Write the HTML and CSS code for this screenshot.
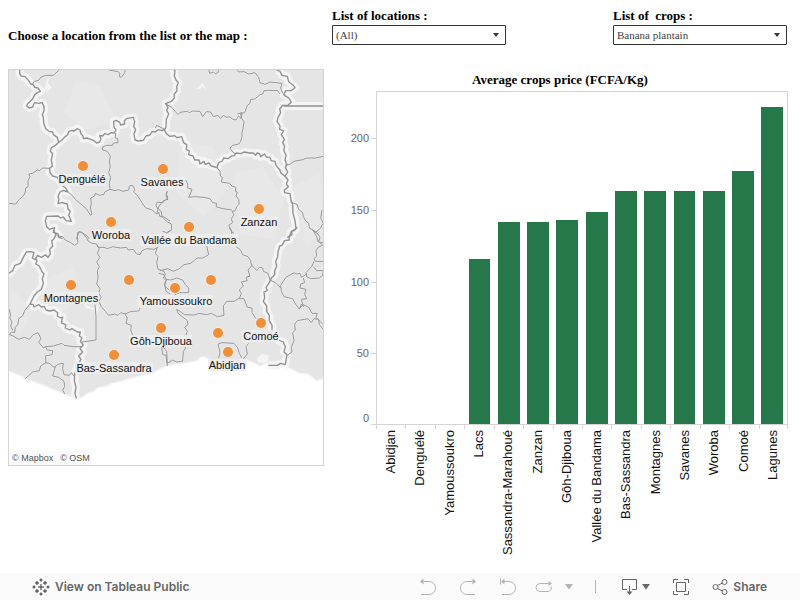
FILE: index.html
```html
<!DOCTYPE html>
<html lang="en">
<head>
<meta charset="utf-8">
<meta name="viewport" content="width=device-width, initial-scale=1">
<title>Average crops price</title>
<link rel="stylesheet" href="styles.css">
</head>
<body>
<header class="filters">
  <h1 class="heading intro">Choose a location from the list or the map :</h1>
  <div class="filter">
    <label class="heading" for="locations">List of locations :</label>
    <div class="select-box">
      <select id="locations"><option>(All)</option><option>Abidjan</option><option>Lagunes</option></select>
      <svg class="caret" viewBox="0 0 6 4" aria-hidden="true"><path d="M0 0h6L3 4z"/></svg>
    </div>
  </div>
  <div class="filter crops">
    <label class="heading" for="crops">List of &nbsp;crops :</label>
    <div class="select-box">
      <select id="crops"><option>Banana plantain</option></select>
      <svg class="caret" viewBox="0 0 6 4" aria-hidden="true"><path d="M0 0h6L3 4z"/></svg>
    </div>
  </div>
</header>

<main class="dashboard">
  <section class="map" aria-label="Map">
    <svg viewBox="9 70 314 395">
      <defs>
        <g id="borders">
          <g transform="translate(0 180)">
            <path d="M60 24L59 40 63 48 75 50 86 62 92 72 100 74 104 82 114 84 121 94 112 98 105 103 97 118 83 131 80 138 88 144 98 141 103 128 117 130 127 128 132 140 132 152 127 164 130 172 131 188 137 206 147 214 158 216 160 224 172 232 176 247 186 240 193 232 203 224 207 214 216 211 222 214 231 206 240 210 242 220 249 228 250 236 261 234 272 238 282 242 290 249 299 246 303 237 299 227 308 228 314 221 325 224 332 218 343 219 348 210 342 202 341 184 349 181 359 187 362 195 374 192 373 183 379 176 400 172 404 185 401 200 407 208 402 222 405 240 415 243 430 241 438 228 450 225 456 215 466 216 474 209 486 212 494 208"/>
            <path d="M176 247L167 256 154 263 151 274 158 281 154 300 157 318 149 325 150 338 158 348 172 352 188 378 197 384 204 396 190 391 180 396 174 410 177 418 174 430 186 428 202 432 204 448 211 454 206 466 214 484 198 482 190 471 182 474 174 468 140 469 136 482 140 500 148 508 164 503 160 517 174 522 176 532 187 535"/>
          </g>
          <g transform="translate(480 180)">
            <path d="M36 24L45 32 43 48 48 60 55 68 50 80 51 92 42 104 43 114 34 124 17 131 24 142 20 152 26 162 19 178 18 200 14 210"/>
            <path d="M12 208L20 222 30 229 44 227 51 233 65 230 71 248 80 254 79 268 88 273 86 284 99 288 104 300 117 300 120 312 132 304 136 313 147 309 154 318 171 323 176 308 187 303 191 294 204 296 214 288 223 287 228 279 243 281 252 276 268 279 280 279 287 286 291 279 299 281 302 290 314 282 319 291 330 292 333 302 345 304 348 316 360 330 362 338 375 349"/>
            <path d="M350 30L360 34 366 46 382 49 386 65 398 74 405 83 393 92 377 92 371 104 386 114 394 126 384 136 368 136 359 147 362 158 354 172 351 184 360 198 359 208 371 213 364 224 373 238 368 248 374 260 371 270 378 286 375 300 381 314 376 322 383 336 375 348 384 360 379 372 385 380 373 390 374 398 390 401 393 421 398 434 399 460 405 482 408 506 395 514 396 524 382 533"/>
            <path d="M370 138H496"/>
          </g>
          <g transform="translate(0 690)">
            <path d="M160 0L168 14 162 26 155 33 158 48 149 58 151 72 144 82 136 74 125 82 112 76 106 89 97 84 102 68 92 65 79 66 70 82 61 100 45 106 38 122 24 132"/>
            <path d="M106 84L111 92 107 102 118 108 126 125 132 132 127 146 130 160 124 178 112 186 102 198 96 210 90 222 100 224 102 231 117 224 124 231 133 229 138 240 150 243 162 240 173 248 172 258 182 264 188 261 184 279 197 284 196 294 210 300 216 296 232 306 241 306 238 318 246 324 241 334 250 345 240 356 248 366 236 378 243 388 236 400 224 432 223 452 228 472 225 490 229 505"/>
          </g>
          <g transform="translate(480 690)">
            <path d="M412 -8L402 2 394 4 388 20 388 30 374 32 366 46 359 48 354 66 353 80 347 94 350 108 344 122 344 134 334 144 328 158 318 172 322 182 312 186 314 204 310 214 320 228 320 244 328 256 328 272 336 286 336 300 354 330 370 336 376 350 372 366 381 374 378 390 376 404 362 400 352 406 325 406"/>
          </g>
        </g>
        <g id="regions">
          <g transform="translate(0 180)">
            <path d="M97 73L103 64 116 61 122 52 136 46 160 46 181 27M326 30L354 35 360 40 358 50 364 52 374 38 376 28"/>
            <path d="M148 325L128 324 118 332 112 330 98 340 86 342 90 350 84 362 84 380 77 384 76 396 70 408 58 418 47 432 24 430"/>
            <path d="M347 219L346 234 353 236 354 248 340 249 338 256 320 256 306 262 308 270 322 274 331 288 328 306 331 320 326 338 332 352 328 370 330 388"/>
            <path d="M205 396L220 410 226 418 240 430 258 445 272 466 276 462 271 444 274 430 272 414 284 408 286 400 298 406 312 403 314 396 330 388 345 392 355 389 370 394 386 390 388 378 398 376 404 388 401 396 412 406 426 428 436 443 456 450 470 462 476 456 480 470 490 470 510 483"/>
            <path d="M502 394L498 402 504 412 488 428 472 426 468 436 474 448 470 462M230 538L234 516 244 516 262 528 268 537"/>
          </g>
          <g transform="translate(480 180)">
            <path d="M-14 205L-10 196 14 208M146 28L149 40 160 36 166 41 174 38 176 28M228 28L236 36 252 35 266 42 285 38 296 52 300 68 316 73 330 66 350 68 366 70 362 84 368 100M17 131L35 142 54 164 60 157 82 154 88 158 98 153 120 154 128 170 139 155 152 156 160 170 174 166 182 176 190 166 200 172 208 170 219 178 228 180 236 168 244 176 242 160 254 158 262 136 270 130 272 118 284 117 300 104 308 102 312 92 326 91 340 92 352 91 360 102"/>
            <path d="M232 162L246 158 244 174 252 184 249 206 246 218 246 230 242 244 236 252 218 256 210 264 218 276 226 282M376 314L388 314 402 304 428 299 440 294 466 294 490 289"/>
            <path d="M171 323L180 334 181 348 187 352 184 366 208 370 216 378 228 382 226 394 232 396 228 408 236 418 238 432 230 440 226 452 216 454 222 464 214 476 218 488 206 496 214 510 216 530"/>
            <path d="M77 360L83 372 83 384 96 388 91 402 86 412 104 410 132 412 150 416 158 428 170 430 168 440 188 446 204 448 216 450"/>
            <path d="M22 394L18 408 24 418 10 422 2 432 -6 444 4 456 6 470 22 486 34 492 35 510 20 520M392 426L412 434 416 448 428 458 430 470 438 484 446 490 448 504 468 516 482 504 486 494 492 490M460 512L470 530 474 545 492 550M486 450L482 474 490 490"/>
          </g>
          <g transform="translate(0 690)">
            <path d="M172 18L188 20 196 30 212 38 224 46 234 38 232 20 238 5 248 10 260 24 264 33 276 40 290 42 294 52 312 52 322 56 338 50 362 54 380 52 384 60 400 58 410 72 420 74 426 62 440 56 462 58 474 52"/>
            <path d="M290 44L298 56 292 70 300 82 290 96 298 110 292 122 294 144 290 162 300 176 296 190 304 202 296 214 304 230 316 244 326 256 344 252 354 256 362 248 376 252 388 246 400 244 416 243 420 234"/>
            <path d="M285 224L288 260 288 330 246 336M374 250L382 264 378 280 394 286 392 300 398 316"/>
            <path d="M472 52L466 70 474 80 470 98 474 118 492 124 496 134 490 144 498 152 494 168 510 182"/>
            <path d="M246 350L220 350 192 346 186 340 160 348 136 350 130 354 116 336 123 326 114 308 100 314 88 328 74 322 56 328 40 318 28 314 34 306 44 308 46 292 54 282 56 266 68 258 74 242 90 222M28 238L32 256 29 264 36 276 32 288 38 300"/>
            <path d="M136 350L142 360 158 362 156 374 136 378 138 398 122 408 118 422 98 426 76 446M136 398L148 400 162 412 176 402 190 400 188 416 192 434 208 436 214 428 222 438M166 410L158 438 176 442 192 454 194 470 188 480 194 492M485 350L488 374 498 376 502 408"/>
          </g>
          <g transform="translate(480 690)">
            <path d="M140 48L146 74 128 84 112 84 92 100 72 104 58 116 40 124 24 116 0 122M-4 130L12 134 18 148 32 150 50 144 68 150 76 164 86 174 86 188 58 188 44 194M20 150L13 160 18 184 30 192M8 4L20 8 30 2M208 -6L216 6 222 10"/>
            <path d="M228 50L242 60 248 74 264 80 272 92 274 106 284 114 290 122 298 112 308 114 310 124 324 130 330 150 346 158 362 174"/>
            <path d="M278 104L264 120 270 138 258 142 262 152 244 156 250 168 238 180 244 190 238 206 252 206 262 232 276 234 276 248 288 266M240 204L228 210 222 214 200 214 190 228 192 256 172 260 154 250 140 254 116 250 104 255 74 254 60 244 50 238 54 250 82 272 84 284 74 292 82 304 74 324 76 356 70 364 68 394 50 396 38 390 22 400 20 364 8 350"/>
            <path d="M176 384L180 366 174 342 186 338 222 340 232 352 238 370 246 384M250 386L262 372 258 350 266 340"/>
            <path d="M456 0L472 10 480 22 476 34 488 46 474 52 468 62 470 78 462 86 466 94 490 94M462 94L456 108 438 128 440 140 452 146 478 144 488 136 490 122 470 122 460 110M440 132L424 142 420 130 408 132 402 128 378 142 362 166 364 184 372 200 398 206 404 218 418 238 424 222 430 230 424 208 440 206 434 192 438 178 420 174 422 162 434 158 430 144M418 236L430 224 446 232 456 250 472 250 468 262 490 284M490 298L478 284 476 268 462 266 454 278 444 266 412 272 404 282 406 300 398 308 402 332 394 352 396 366 382 376"/>
          </g>
        </g>
      </defs>
      <g transform="scale(.33333333)">
        <path class="land" d="M24 200H980V1132L950 1142 938 1132 924 1122 900 1120 876 1108 858 1100 836 1102 824 1092 796 1090 780 1098 756 1086 740 1080 720 1086 640 1084 612 1070 600 1072 592 1082 560 1088 530 1092 500 1098 474 1110 450 1122 430 1126 410 1130 394 1134 362 1144 334 1150 318 1158 292 1164 280 1174 262 1180 246 1192 226 1197 210 1188 190 1180 168 1172 148 1162 120 1152 92 1142 76 1136 60 1126 38 1118 20 1110V200Z"/>
        <g class="relief">
          <path d="M230 240L300 260 350 360 260 390 190 340Z"/>
          <path d="M540 430L640 440 690 560 610 650 530 580Z"/>
          <path d="M110 850L220 800 230 900 160 960Z"/>
          <path d="M700 520L790 500 850 600 820 720 720 700Z"/>
          <path d="M30 860L100 930 60 1010 30 960Z"/>
          <path d="M880 560L960 520 970 690 920 740Z"/>
        </g>
        <path class="lake" d="M140 240L148 234 144 250 156 262 138 278 144 264 130 276 136 256ZM588 268L608 248 618 270 608 260 600 266ZM250 910L276 924 296 914 290 952 284 930 258 924ZM770 1076L784 1062 806 1064 804 1090 776 1088Z"/>
        <use href="#borders" class="halo"/>
        <use href="#regions" class="halo-soft"/>
        <use href="#regions" class="region-line"/>
        <use href="#borders" class="border-line"/>
      </g>
      <g class="plates">
        <rect x="58" y="174" width="48" height="12"/><rect x="140" y="177" width="45" height="12"/>
        <rect x="91" y="229" width="40" height="12"/><rect x="140" y="234" width="98" height="12"/>
        <rect x="240" y="216" width="38" height="12"/><rect x="43" y="292" width="56" height="12"/>
        <rect x="138" y="295" width="75" height="12"/><rect x="129" y="335" width="63" height="12"/>
        <rect x="242" y="330" width="37" height="12"/><rect x="75" y="362" width="78" height="12"/>
        <rect x="208" y="359" width="38" height="12"/>
      </g>
      <g class="dots">
        <circle cx="83" cy="166" r="5"/><circle cx="163" cy="169" r="5"/><circle cx="259" cy="209" r="5"/>
        <circle cx="111" cy="222" r="5"/><circle cx="189" cy="227" r="5"/><circle cx="71" cy="285" r="5"/>
        <circle cx="129" cy="280" r="5"/><circle cx="175" cy="288" r="5"/><circle cx="211" cy="280" r="5"/>
        <circle cx="161" cy="328" r="5"/><circle cx="218" cy="333" r="5"/><circle cx="261" cy="323" r="5"/>
        <circle cx="228" cy="352" r="5"/><circle cx="114" cy="355" r="5"/>
      </g>
      <g class="places">
        <text x="82" y="183">Denguélé</text><text x="162" y="186">Savanes</text>
        <text x="111" y="239">Woroba</text><text x="189" y="244">Vallée du Bandama</text>
        <text x="259" y="226">Zanzan</text><text x="71" y="302">Montagnes</text>
        <text x="176" y="305">Yamoussoukro</text><text x="161" y="345">Gôh-Djiboua</text>
        <text x="261" y="340">Comoé</text><text x="114" y="372">Bas-Sassandra</text>
        <text x="227" y="369">Abidjan</text>
      </g>
    </svg>
    <p class="credits"><span>© Mapbox</span><span>© OSM</span></p>
  </section>

  <section class="chart">
    <h2 class="heading chart-title">Average crops price (FCFA/Kg)</h2>
    <div class="axis">
      <span>200</span><span>150</span><span>100</span><span>50</span><span class="zero">0</span>
    </div>
    <div class="plot">
      <div class="bar" style="height:0%"></div>
      <div class="bar" style="height:0%"></div>
      <div class="bar" style="height:0%"></div>
      <div class="bar" style="height:49.6%"></div>
      <div class="bar" style="height:60.8%"></div>
      <div class="bar" style="height:60.8%"></div>
      <div class="bar" style="height:61.4%"></div>
      <div class="bar" style="height:63.8%"></div>
      <div class="bar" style="height:70.1%"></div>
      <div class="bar" style="height:70.1%"></div>
      <div class="bar" style="height:70.1%"></div>
      <div class="bar" style="height:70.1%"></div>
      <div class="bar" style="height:76.1%"></div>
      <div class="bar" style="height:95.4%"></div>
    </div>
    <div class="categories">
      <div><span>Abidjan</span></div><div><span>Denguélé</span></div><div><span>Yamoussoukro</span></div>
      <div><span>Lacs</span></div><div><span>Sassandra-Marahoué</span></div><div><span>Zanzan</span></div>
      <div><span>Gôh-Djiboua</span></div><div><span>Vallée du Bandama</span></div><div><span>Bas-Sassandra</span></div>
      <div><span>Montagnes</span></div><div><span>Savanes</span></div><div><span>Woroba</span></div>
      <div><span>Comoé</span></div><div><span>Lagunes</span></div>
    </div>
  </section>
</main>

<footer class="toolbar">
  <a class="brand" href="#">
    <svg width="18" height="18" viewBox="0 0 18 18" aria-hidden="true"><path d="M9 6v6M6 9h6M5 3v4M3 5h4M13 3v4M11 5h4M5 11v4M3 13h4M13 11v4M11 13h4M9 .5v3M7.500 2h3M9 14.500v3M7.500 16h3M2 7.500v3M.5 9h3M16 7.500v3M14.500 9h3"/></svg>
    View on Tableau Public
  </a>
  <div class="tools">
    <div class="history">
      <button class="muted" aria-label="Undo"><svg width="18" height="18" viewBox="0 0 18 18"><path d="M3 3.500h7a6 6 0 0 1 0 13H2"/><path class="solid" d="M1 3.500L4.500 .5v6z"/></svg></button>
      <button class="muted" aria-label="Redo"><svg width="18" height="18" viewBox="0 0 18 18"><path d="M15 3.500H8a6 6 0 0 0 0 13h8"/><path class="solid" d="M17 3.500L13.500 .5v6z"/></svg></button>
      <button class="muted" aria-label="Revert"><svg width="18" height="18" viewBox="0 0 18 18"><path d="M4 3.500h6a6 6 0 0 1 0 13H3M1.500 .5v6"/><path class="solid" d="M2 3.500L5.500 .5v6z"/></svg></button>
    </div>
    <button class="muted refresh" aria-label="Refresh"><svg width="18" height="18" viewBox="0 0 18 18"><path d="M14 5.500H5a3.500 3.500 0 0 0 0 8h8a3.500 3.500 0 0 0 3-5"/><path class="solid" d="M17 5.500L13.500 3v5z"/></svg><svg class="down" width="8" height="6" viewBox="0 0 8 6"><path class="solid" d="M0 0h8L4 5.500z"/></svg></button>
    <span class="divider"></span>
    <button class="download" aria-label="Download"><svg width="18" height="18" viewBox="0 0 18 18"><path d="M6 11.500H1.500v-10h14v10H11M8.500 8v7"/><path class="solid" d="M5.500 13.500h6l-3 3.500z"/></svg><svg class="down" width="8" height="6" viewBox="0 0 8 6"><path class="solid" d="M0 0h8L4 5.500z"/></svg></button>
    <button class="full" aria-label="Full screen"><svg width="18" height="18" viewBox="0 0 18 18"><path d="M1.500 5V1.500H6M12 1.500h4.500V5M16.500 13v3.500H12M6 16.500H1.500V13M4.500 4.500h9v9h-9z"/></svg></button>
    <button class="share"><svg width="16" height="18" viewBox="0 0 16 18" aria-hidden="true"><circle cx="3.500" cy="9" r="2.500"/><circle cx="12.500" cy="4" r="2.500"/><circle cx="12.500" cy="14" r="2.500"/><path d="M5.500 7.500l5-2.500M5.500 10.500l5 2.500"/></svg>Share</button>
  </div>
</footer>
</body>
</html>
```

FILE: styles.css
```css
* {
  box-sizing: border-box;
}

body {
  margin: 0;
  min-height: 100vh;
  display: flex;
  flex-direction: column;
  background: #fff;
  color: #000;
  font-family: "Liberation Sans", Arial, sans-serif;
}

.heading {
  margin: 0;
  font: bold 13px/16px "Liberation Serif", "Times New Roman", serif;
}

.filters {
  display: grid;
  grid-template-columns: 324fr 174fr 107fr 174fr;
  align-items: end;
  padding: 8px 13px 0 8px;
}

.intro {
  padding-bottom: 1px;
}

.filter.crops {
  grid-column: 4;
}

.filter label {
  display: block;
  margin-bottom: 1px;
}

.select-box {
  position: relative;
}

.select-box select {
  display: block;
  width: 100%;
  height: 20px;
  padding: 0 3px;
  appearance: none;
  border: 1px solid #333;
  border-radius: 1px;
  background: #fff;
  color: #444;
  font: 11px/18px "Liberation Serif", "Times New Roman", serif;
}

.caret {
  position: absolute;
  top: 8px;
  right: 7px;
  width: 6px;
  height: 4px;
  fill: #333;
  pointer-events: none;
}

.dashboard {
  display: grid;
  grid-template-columns: 316fr 447fr;
  gap: 17px;
  align-items: start;
  padding: 24px 12px 16px 8px;
}

.map {
  position: relative;
  border: 1px solid #d4d4d4;
}

.map svg {
  display: block;
  width: 100%;
}

.land {
  fill: #e5e5e5;
  stroke: #f2f2f2;
  stroke-width: 4;
}

.relief {
  fill: #e8e8e8;
}

.lake {
  fill: #f4f4f4;
}

.halo,
.halo-soft,
.region-line,
.border-line {
  fill: none;
  stroke-linejoin: round;
}

.halo {
  stroke: #f4f4f4;
  stroke-width: 24;
}

.halo-soft {
  stroke: #ececec;
  stroke-width: 7;
}

.region-line {
  stroke: #969696;
  stroke-width: 3;
}

.border-line {
  stroke: #919191;
  stroke-width: 4;
}

.plates {
  fill: #ededed;
}

.dots {
  fill: #f28e37;
  stroke: #ececec;
  stroke-width: 2;
  paint-order: stroke;
}

.places {
  font-size: 11px;
  text-anchor: middle;
  fill: #111;
}

.credits {
  position: absolute;
  left: 1px;
  bottom: 0;
  display: flex;
  gap: 5px;
  margin: 0;
  padding: 0 2px;
  background: #fafafa;
  color: #555;
  font-size: 9px;
  line-height: 14px;
}

.credits span + span {
  padding-left: 2px;
}

.chart {
  display: grid;
  grid-template-columns: 35px 1fr;
  grid-template-rows: auto 334px auto;
  padding-top: 3px;
}

.chart-title {
  grid-column: 2;
  justify-self: center;
  padding-right: 44px;
  margin-bottom: 3px;
}

.axis {
  display: grid;
  grid-template-rows: repeat(4, minmax(0, 1fr));
  padding-top: 47px;
  color: #666;
  font-size: 11px;
  line-height: 14px;
  text-align: right;
}

.axis span {
  align-self: start;
  position: relative;
  margin-top: -7px;
  padding-right: 7px;
}

.axis span::after {
  content: "";
  position: absolute;
  top: 7px;
  right: 0;
  width: 5px;
  height: 1px;
  background: #d4d4d4;
}

.axis span:nth-child(4),
.axis .zero {
  grid-area: 4 / 1;
}

.axis .zero {
  align-self: end;
}

.axis .zero::after {
  top: auto;
  bottom: 0;
}

.plot,
.categories {
  grid-column: 2;
  display: grid;
  grid-template-columns: repeat(14, 1fr);
}

.plot {
  align-items: end;
  border: 1px solid #d4d4d4;
}

.bar {
  width: 75%;
  justify-self: center;
  background: #26784a;
}

.categories div {
  display: flex;
  justify-content: center;
  align-items: flex-start;
  padding-top: 5px;
  background: linear-gradient(#d4d4d4, #d4d4d4) left top / 1px 4px no-repeat;
}

.categories div:last-child {
  background:
    linear-gradient(#d4d4d4, #d4d4d4) left top / 1px 4px no-repeat,
    linear-gradient(#d4d4d4, #d4d4d4) right top / 1px 4px no-repeat;
}

.categories span {
  writing-mode: vertical-rl;
  transform: rotate(180deg);
  color: #111;
  font-size: 13px;
  line-height: 16px;
  white-space: nowrap;
}

.toolbar {
  display: flex;
  align-items: center;
  justify-content: space-between;
  height: 27px;
  margin-top: auto;
  padding: 0 33px 0 32px;
  background: #fafafa;
  color: #666;
}

.brand,
.toolbar button {
  display: flex;
  align-items: center;
  gap: 5px;
  color: #666;
  font: 600 12px/18px Inter, "Open Sans", sans-serif;
  text-decoration: none;
}

.toolbar button {
  padding: 0;
  border: 0;
  background: none;
}

.toolbar svg {
  fill: none;
  stroke: currentColor;
  stroke-width: 1;
}

.brand svg {
  color: #333;
}

.toolbar .solid {
  fill: currentColor;
  stroke: none;
}

.tools,
.history {
  display: flex;
  align-items: center;
  gap: 22px;
}

.history {
  margin-right: -4px;
}

.toolbar .muted {
  color: #b4b4b4;
}

.toolbar .refresh {
  gap: 12px;
}

.divider {
  width: 1px;
  height: 13px;
  margin-right: 3px;
  background: #b4b4b4;
}

.toolbar .download {
  gap: 3px;
}
```
